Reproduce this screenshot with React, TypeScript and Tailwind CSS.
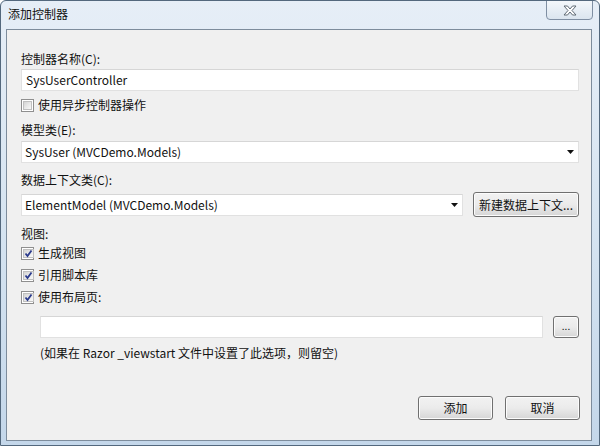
import React from "react";

const font = { fontFamily: '"Noto Sans CJK SC", "Noto Sans", sans-serif' };

function Check({ checked, label }: { checked: boolean; label: string }) {
  return (
    <div className="flex items-center h-[16px]">
      <div className="w-[13px] h-[13px] border border-[#8f8f8f] bg-white p-[1px] flex">
        <div className="flex-1 bg-gradient-to-br from-[#d4d4d4] via-[#e8e8e8] to-[#f8f8f8] border border-[#c0c0c0] flex items-center justify-center">
          {checked && (
            <svg width="9" height="9" viewBox="0 0 9 9">
              <path d="M1.5 4.5 L3.5 7 L7.5 1.5" fill="none" stroke="#2a3a8c" strokeWidth="1.8" />
            </svg>
          )}
        </div>
      </div>
      <span className="ml-[4px] text-[12px] leading-[16px] text-[#111]">{label}</span>
    </div>
  );
}

function Combo({ text, width }: { text: string; width: string }) {
  return (
    <div className={`${width} h-[22px] bg-white border border-[#e1e1e1] border-t-[#d6d6d6] flex items-center pl-[3px] pr-[4px]`}>
      <span className="flex-1 text-[12px] leading-[16px] text-[#111]">{text}</span>
      <svg width="7" height="4" viewBox="0 0 7 4">
        <path d="M0 0 H7 L3.5 4 Z" fill="#111" />
      </svg>
    </div>
  );
}

function Btn({ children, className }: { children: React.ReactNode; className: string }) {
  return (
    <div
      className={`${className} border border-[#707070] rounded-[3px] bg-gradient-to-b from-[#f2f2f2] via-[#ebebeb] to-[#d6d6d6] shadow-[inset_0_0_0_1px_#fcfcfc] flex items-center justify-center text-[12px] leading-[16px] text-[#111]`}
    >
      {children}
    </div>
  );
}

export default function App() {
  return (
    <div
      style={font}
      className="w-[600px] h-[446px] overflow-hidden flex flex-col bg-gradient-to-b from-[#e6eef7] via-[#d6e4f1] to-[#c4d7ea] border border-[#53687d] rounded-t-[6px]"
    >
      <div className="h-[28px] flex items-start relative">
        <span className="ml-[7px] mt-[5px] text-[12px] leading-[16px] text-[#111]">添加控制器</span>
        <div className="ml-auto mr-[6px] -mt-[1px] w-[47px] h-[20px] border border-[#7f8fa3] rounded-b-[4px] bg-gradient-to-b from-[#f3f7fb] to-[#dbe5ef] flex items-center justify-center">
          <svg width="14" height="11" viewBox="0 0 14 11">
            <path d="M1 1 H4.5 L7 4 L9.5 1 H13 L9 5.5 L13 10 H9.5 L7 7 L4.5 10 H1 L5 5.5 Z" fill="#ffffff" stroke="#5f6a75" strokeWidth="1" />
          </svg>
        </div>
      </div>
      <div className="ml-[5px] mr-[7px] mb-[4px] flex-1 border border-[#7d8c9c] bg-[#f0f0f0] flex flex-col pl-[14px]">
        <div className="mt-[21px] text-[12px] leading-[16px] text-[#111]">控制器名称(C):</div>
        <div className="mt-[2px] w-[558px] h-[22px] bg-white border border-[#e1e1e1] border-t-[#d6d6d6] flex items-center pl-[4px] text-[12px] leading-[16px] text-[#111]">
          SysUserController
        </div>
        <div className="mt-[6px]">
          <Check checked={false} label="使用异步控制器操作" />
        </div>
        <div className="mt-[9px] text-[12px] leading-[16px] text-[#111]">模型类(E):</div>
        <div className="mt-[3px]">
          <Combo text="SysUser (MVCDemo.Models)" width="w-[558px]" />
        </div>
        <div className="mt-[9px] text-[12px] leading-[16px] text-[#111]">数据上下文类(C):</div>
        <div className="mt-[4px] flex items-center h-[25px]">
          <Combo text="ElementModel (MVCDemo.Models)" width="w-[442px]" />
          <Btn className="ml-[10px] w-[106px] h-[25px]">新建数据上下文...</Btn>
        </div>
        <div className="mt-[9px] text-[12px] leading-[16px] text-[#111]">视图:</div>
        <div className="mt-[3px]">
          <Check checked label="生成视图" />
        </div>
        <div className="mt-[6px]">
          <Check checked label="引用脚本库" />
        </div>
        <div className="mt-[6px]">
          <Check checked label="使用布局页:" />
        </div>
        <div className="mt-[11px] flex items-center pl-[19px]">
          <div className="w-[503px] h-[22px] bg-white border border-[#e1e1e1] border-t-[#d6d6d6]" />
          <Btn className="ml-[10px] w-[26px] h-[22px]">
            <span className="text-[10px] leading-[10px] -mt-[2px]">...</span>
          </Btn>
        </div>
        <div className="mt-[7px] pl-[19px] text-[12px] leading-[16px] text-[#111]">
          (如果在 Razor _viewstart 文件中设置了此选项，则留空)
        </div>
        <div className="mt-[35px] flex">
          <Btn className="ml-[397px] w-[75px] h-[24px]">添加</Btn>
          <Btn className="ml-[12px] w-[75px] h-[24px]">取消</Btn>
        </div>
      </div>
    </div>
  );
}
